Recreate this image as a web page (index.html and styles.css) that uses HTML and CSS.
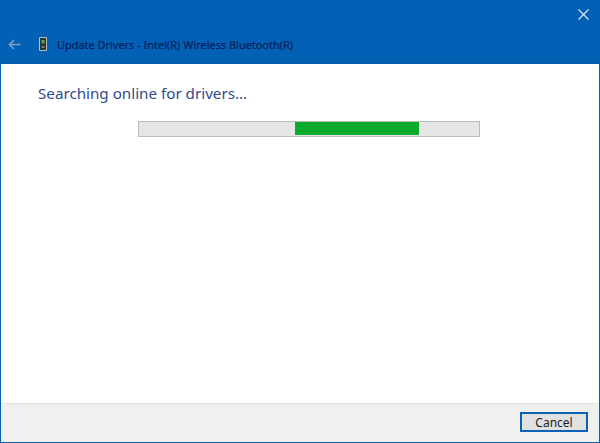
FILE: index.html
```html
<!DOCTYPE html>
<html lang="en">
<head>
<meta charset="utf-8">
<title>Update Drivers</title>
<link rel="stylesheet" href="styles.css">
</head>
<body>
<div class="window">
  <header class="header">
    <div class="close-row">
      <svg class="close" width="11" height="11" viewBox="0 0 11 11"><path d="M.5.5l10 10M10.5.5l-10 10" stroke="#dbe8f5" stroke-width="1.2" fill="none"/></svg>
    </div>
    <div class="title-row">
      <svg class="back" width="13" height="11" viewBox="0 0 13 11"><path d="M12.5 5.5H1.5M6 1 1.5 5.5 6 10" stroke="#7c9fc8" stroke-width="1.6" fill="none"/></svg>
      <svg class="device" width="8" height="14" viewBox="0 0 8 14"><rect width="8" height="14" rx="1" fill="#b9bdb8"/><rect x="1" y="1" width="6" height="12" fill="#2a3530"/><rect x="2.5" y="3" width="3" height="3.5" fill="#4fae4a"/><rect x="2.5" y="9" width="3" height="2" fill="#7a7085"/></svg>
      <span class="title">Update Drivers - Intel(R) Wireless Bluetooth(R)</span>
    </div>
  </header>
  <main class="content">
    <h1 class="heading">Searching online for drivers...</h1>
    <div class="progress"><div class="progress-fill"></div></div>
  </main>
  <footer class="footer">
    <button class="cancel" type="button">Cancel</button>
  </footer>
</div>
</body>
</html>
```
FILE: styles.css
```css
* { box-sizing: border-box; }
html, body { margin: 0; padding: 0; }
body { width: 600px; height: 443px; overflow: hidden; font-family: "Open Sans", "Liberation Sans", sans-serif; }
.window {
  width: 600px; height: 443px;
  display: flex; flex-direction: column;
  background: #fff;
  border: solid #0a5fb0;
  border-width: 0 1px 1px;
}
.header {
  height: 64px; flex: none; margin: 0 -1px;
  background: #0361b5;
  border-bottom: 1px solid #0b5ca8;
  display: flex; flex-direction: column;
}
.close-row { display: flex; justify-content: flex-end; padding: 9px 11px 0 0; height: 32px; }
.close { display: block; }
.title-row { display: flex; align-items: center; padding-left: 8px; height: 24px; }
.back { margin-right: 18px; }
.device { margin-right: 10px; }
.title { font-family: "Noto Sans", "Open Sans", sans-serif; font-size: 10.95px; color: #07205c; -webkit-text-stroke: 0.2px #07205c; white-space: nowrap; }
.content { flex: 1; padding: 19px 0 0 37px; }
.heading { margin: 0; font-family: "Noto Sans", "Open Sans", sans-serif; font-weight: 400; font-size: 15.2px; line-height: 21px; color: #2f4a8f; }
.progress {
  width: 342px; height: 16px; margin: 17px 0 0 100px;
  background: #e6e6e6; border: 1px solid #bcbcbc;
  padding-left: 156px;
}
.progress-fill { width: 124px; height: 13px; background: #0bab2b; }
.footer {
  height: 39px; flex: none;
  background: #f0f0f0; border-top: 1px solid #dfdfdf;
  display: flex; justify-content: flex-end; align-items: flex-start;
  padding: 8px 11px 0 0;
}
.cancel {
  width: 68px; height: 20px; padding: 0;
  background: #e1e1e1; border: 2px solid #0a62b3;
  font-family: "Noto Sans", "Open Sans", sans-serif; font-size: 12px; color: #1c1c1c;
}
```
